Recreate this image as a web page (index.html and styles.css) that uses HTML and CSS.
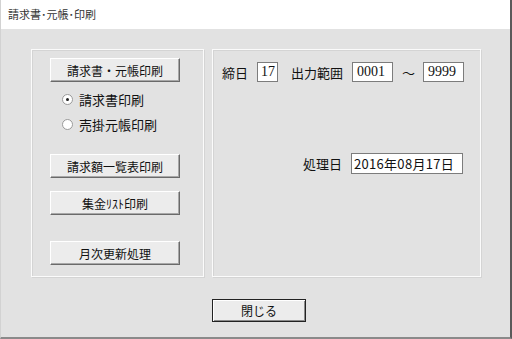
FILE: index.html
```html
<!DOCTYPE html>
<html lang="ja">
<head>
    <meta charset="UTF-8">
    <title>請求書･元帳･印刷</title>
    <link rel="stylesheet" href="styles.css">
</head>
<body>
    <div class="window">
        <div class="titlebar">請求書･元帳･印刷</div>
        <div class="client">
            <div class="panels">
                <div class="group left">
                    <button class="btn">請求書・元帳印刷</button>
                    <div class="radios">
                        <label class="radio"><span class="dot checked"></span>請求書印刷</label>
                        <label class="radio"><span class="dot"></span>売掛元帳印刷</label>
                    </div>
                    <button class="btn b2">請求額一覧表印刷</button>
                    <button class="btn b3">集金ﾘｽﾄ印刷</button>
                    <button class="btn b4">月次更新処理</button>
                </div>
                <div class="group right">
                    <div class="row">
                        <span class="lbl">締日</span>
                        <div class="field f-day">17</div>
                        <span class="lbl range">出力範囲</span>
                        <div class="field f-code">0001</div>
                        <span class="tilde">～</span>
                        <div class="field f-code">9999</div>
                    </div>
                    <div class="row date-row">
                        <span class="lbl">処理日</span>
                        <div class="field f-date">2016年08月17日</div>
                    </div>
                </div>
            </div>
            <div class="footer">
                <button class="btn close">閉じる</button>
            </div>
        </div>
    </div>
</body>
</html>
```

FILE: styles.css
```css
html, body {
    margin: 0;
    padding: 0;
}
body {
    font-family: "Noto Sans CJK JP", "DejaVu Sans", sans-serif;
    color: #111;
    width: 512px;
    height: 339px;
    overflow: hidden;
}
.window {
    width: 512px;
    height: 339px;
    box-sizing: border-box;
    background: #e2e2e2;
    border-right: 2px solid #5a5a5a;
    border-bottom: 2px solid #8a8a8a;
    border-left: 1px solid #d2d2d2;
    display: flex;
    flex-direction: column;
}
.titlebar {
    height: 29px;
    background: #fff;
    font-size: 11px;
    line-height: 29px;
    padding-left: 7px;
    color: #333;
}
.client {
    padding: 20px 0 0 30px;
}
.panels {
    display: flex;
    gap: 8px;
}
.group {
    height: 228px;
    box-sizing: border-box;
    border: 1px solid #fbfbfb;
    box-shadow: inset 1px 1px 0 #d4d4d4, 1px 1px 0 #d4d4d4;
}
.left {
    width: 173px;
    padding: 8px 0 0 18px;
    display: flex;
    flex-direction: column;
    align-items: flex-start;
}
.right {
    width: 269px;
    padding: 12px 17px 0 9px;
}
.btn {
    font-family: inherit;
    font-size: 12px;
    color: #111;
    width: 130px;
    height: 24px;
    padding: 0;
    background: #ececec;
    border: 1px solid;
    border-color: #ffffff #6a6a6a #6a6a6a #ffffff;
    box-shadow: inset -1px -1px 0 #a8a8a8;
}
.radios {
    display: flex;
    flex-direction: column;
    padding: 5px 0 0 12px;
}
.radio {
    height: 25px;
    display: flex;
    align-items: center;
    font-size: 13px;
}
.dot {
    width: 9px;
    height: 9px;
    border-radius: 50%;
    background: #fff;
    border: 1px solid #9a9a9a;
    margin-right: 6px;
    position: relative;
}
.dot.checked::after {
    content: "";
    position: absolute;
    left: 3px;
    top: 3px;
    width: 3px;
    height: 3px;
    border-radius: 50%;
    background: #222;
}
.b2 { margin-top: 17px; }
.b3 { margin-top: 13px; }
.b4 { margin-top: 26px; }
.row {
    display: flex;
    align-items: center;
    height: 20px;
    white-space: nowrap;
}
.row > * {
    flex-shrink: 0;
}
.lbl {
    font-size: 13px;
    margin-right: 9px;
}
.range { margin-left: 13px; }
.field {
    height: 20px;
    box-sizing: border-box;
    background: #fff;
    border: 1px solid #7c7c7c;
    font-family: "Liberation Serif", "Noto Sans CJK JP", serif;
    font-size: 14px;
    line-height: 18px;
    padding-left: 3px;
}
.f-day { width: 21px; }
.f-code { width: 41px; padding-left: 4px; }
.tilde {
    font-size: 13px;
    margin: 0 8px 0 9px;
}
.date-row {
    justify-content: flex-end;
    margin-top: 71px;
    height: 21px;
}
.f-date {
    width: 112px;
    height: 21px;
    font-family: "Noto Sans CJK JP", sans-serif;
    font-size: 13px;
    line-height: 19px;
    padding-left: 2px;
    letter-spacing: 0.3px;
}
.footer {
    padding: 20px 0 0 181px;
}
.close {
    width: 94px;
    height: 23px;
    border: 1px solid #222;
    box-shadow: inset 1px 1px 0 #fff, inset -1px -1px 0 #8a8a8a;
}
```
